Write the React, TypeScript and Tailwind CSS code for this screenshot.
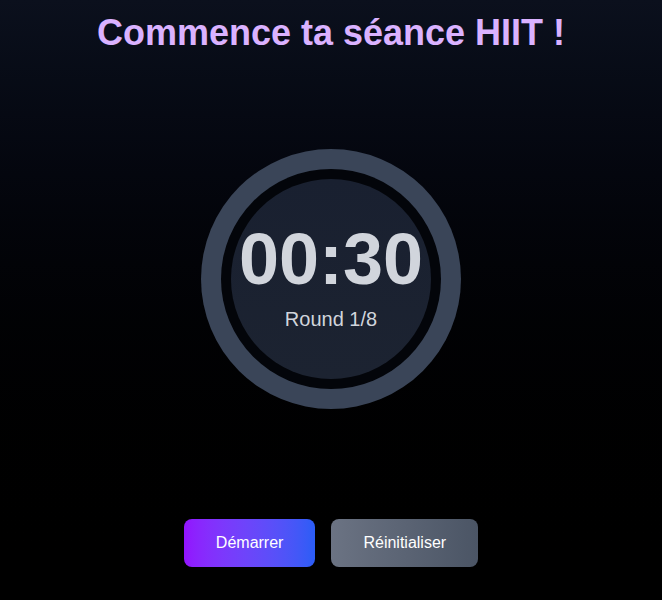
export default function App() {
  return (
    <div
      className="min-h-screen w-full bg-linear-to-b from-[#0b101d] to-black flex flex-col items-center pt-[13px]"
      style={{ fontFamily: '"Liberation Sans", Arial, sans-serif' }}
    >
      <h1 className="text-4xl font-bold text-purple-300">Commence ta séance HIIT !</h1>

      <div className="mt-[96px] w-[260px] h-[260px] rounded-full bg-[#3a4558] flex items-center justify-center">
        <div className="w-[220px] h-[220px] rounded-full bg-[#03050a] flex items-center justify-center">
          <div className="w-[200px] h-[200px] rounded-full bg-linear-to-b from-[#192030] to-[#1c2331] flex flex-col items-center justify-center">
            <div className="text-7xl font-bold text-gray-300 leading-none -mt-[2px]">00:30</div>
            <div className="text-xl text-gray-300 mt-[10px]">Round 1/8</div>
          </div>
        </div>
      </div>

      <div className="mt-[110px] flex gap-4">
        <button className="px-8 py-3 rounded-lg text-white bg-linear-to-r from-[#9213fe] to-[#2a5df6]">
          Démarrer
        </button>
        <button className="px-8 py-3 rounded-lg text-white bg-linear-to-r from-[#6b7383] to-[#4b5565]">
          Réinitialiser
        </button>
      </div>
    </div>
  );
}
